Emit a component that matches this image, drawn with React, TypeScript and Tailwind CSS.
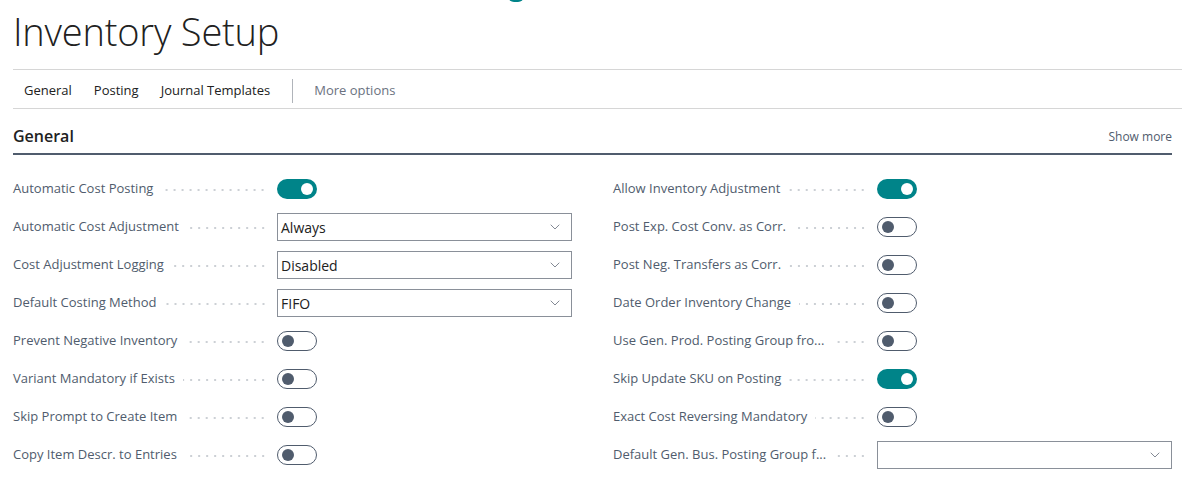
import { ChevronDown } from 'lucide-react';

type Field =
  | { label: string; kind: 'toggle'; on: boolean }
  | { label: string; kind: 'select'; value: string };

const leftFields: Field[] = [
  { label: 'Automatic Cost Posting', kind: 'toggle', on: true },
  { label: 'Automatic Cost Adjustment', kind: 'select', value: 'Always' },
  { label: 'Cost Adjustment Logging', kind: 'select', value: 'Disabled' },
  { label: 'Default Costing Method', kind: 'select', value: 'FIFO' },
  { label: 'Prevent Negative Inventory', kind: 'toggle', on: false },
  { label: 'Variant Mandatory if Exists', kind: 'toggle', on: false },
  { label: 'Skip Prompt to Create Item', kind: 'toggle', on: false },
  { label: 'Copy Item Descr. to Entries', kind: 'toggle', on: false },
];

const rightFields: Field[] = [
  { label: 'Allow Inventory Adjustment', kind: 'toggle', on: true },
  { label: 'Post Exp. Cost Conv. as Corr.', kind: 'toggle', on: false },
  { label: 'Post Neg. Transfers as Corr.', kind: 'toggle', on: false },
  { label: 'Date Order Inventory Change', kind: 'toggle', on: false },
  { label: 'Use Gen. Prod. Posting Group fro...', kind: 'toggle', on: false },
  { label: 'Skip Update SKU on Posting', kind: 'toggle', on: true },
  { label: 'Exact Cost Reversing Mandatory', kind: 'toggle', on: false },
  { label: 'Default Gen. Bus. Posting Group f...', kind: 'select', value: '' },
];

const Toggle = ({ on }: { on: boolean }) =>
  on ? (
    <div className="flex h-[20px] w-[40px] items-center justify-end rounded-full bg-[#008489] pr-[4px]">
      <div className="h-[12px] w-[12px] rounded-full bg-white" />
    </div>
  ) : (
    <div className="flex h-[20px] w-[40px] items-center rounded-full border border-[#505c6d] bg-white pl-[4px]">
      <div className="h-[12px] w-[12px] rounded-full bg-[#505c6d]" />
    </div>
  );

const Select = ({ value }: { value: string }) => (
  <div className="flex h-[28px] flex-1 items-center justify-between border border-[#8a9099] bg-white pr-[8px] pl-[3px] text-[14px] text-[#212121]">
    <span>{value}</span>
    <ChevronDown className="h-[16px] w-[16px] text-[#6b7280]" strokeWidth={1.25} />
  </div>
);

const Row = ({ field }: { field: Field }) => (
  <div className="flex h-[38px] items-center">
    <div className="flex w-[264px] shrink-0 items-center pr-[10px]">
      <span className="whitespace-nowrap text-[#505c6d]">{field.label}</span>
      <div className="mt-[2px] ml-[8px] h-[2px] flex-1 bg-[radial-gradient(circle,#ccd0d5_0.9px,transparent_1.1px)] bg-[length:8px_2px] bg-right" />
    </div>
    {field.kind === 'toggle' ? <Toggle on={field.on} /> : <Select value={field.value} />}
  </div>
);

export default function App() {
  const tabs = ['General', 'Posting', 'Journal Templates'];

  return (
    <div
      className="relative h-[487px] w-[1182px] overflow-hidden bg-white text-[14px]"
      style={{ fontFamily: '"Open Sans", "Noto Sans", sans-serif' }}
    >
      {/* teal edge of something cut off above */}
      <div className="absolute top-[-10px] left-[508px] h-[12px] w-[16px] rounded-full border-b-[3px] border-[#008489]" />

      <div className="pl-[13px]">
        <h1 className="pt-[5px] text-[38px] leading-[52px] font-light tracking-[-0.2px] text-[#212121]">
          Inventory Setup
        </h1>

        <div className="mt-[12px] border-t border-[#d6d6d6]" />

        {/* action bar */}
        <div className="flex h-[38px] items-center pt-[3px] pl-[11px] text-[13px] text-[#212121]">
          {tabs.map((t) => (
            <span key={t} className="mr-[22px]">
              {t}
            </span>
          ))}
          <div className="h-[24px] w-px bg-[#b0b4ba]" />
          <span className="ml-[21px] text-[#6b7280]">More options</span>
        </div>

        <div className="border-t border-[#d6d6d6]" />
      </div>

      <div className="px-[10px] pl-[13px]">
        <div className="flex h-[46px] items-end justify-between border-b-2 border-[#505c6d] pb-[5px]">
          <span className="text-[16px] font-semibold text-[#212121]">General</span>
          <span className="pb-[2px] text-[12px] text-[#505c6d]">Show more</span>
        </div>

        <div className="mt-[15px] grid grid-cols-2 gap-x-[41px] text-[13px]">
          <div className="flex flex-col">
            {leftFields.map((f) => (
              <Row key={f.label} field={f} />
            ))}
          </div>
          <div className="flex flex-col">
            {rightFields.map((f) => (
              <Row key={f.label} field={f} />
            ))}
          </div>
        </div>
      </div>
    </div>
  );
}
